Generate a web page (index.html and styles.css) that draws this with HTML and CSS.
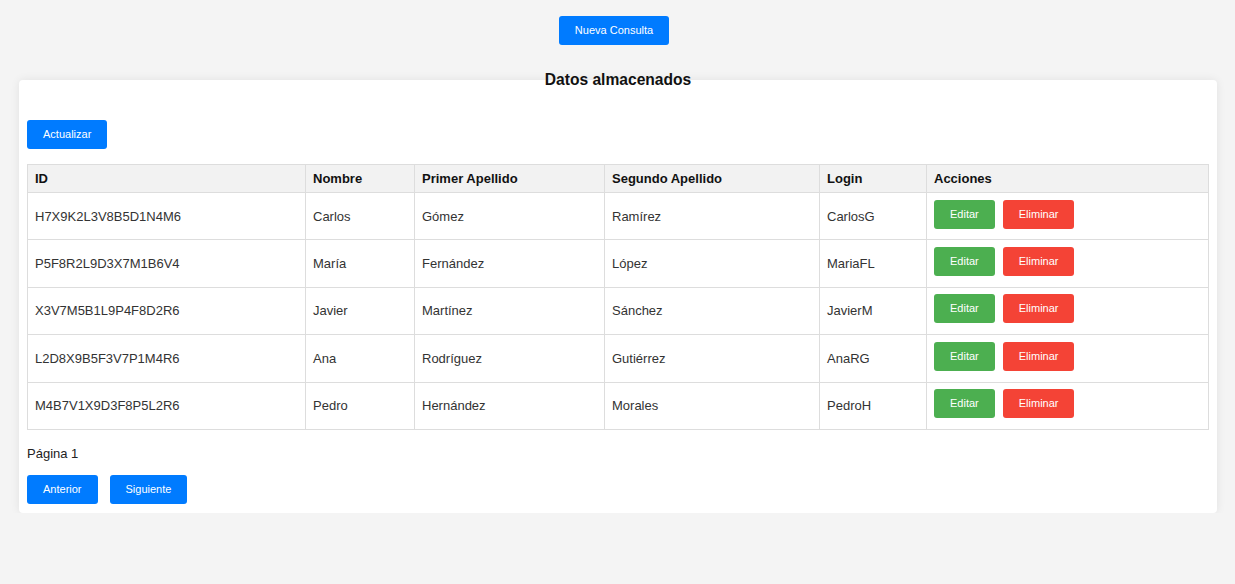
FILE: index.html
```html
<!DOCTYPE html>
<html lang="es">
<head>
<meta charset="utf-8">
<title>Datos almacenados</title>
<link rel="stylesheet" href="styles.css">
</head>
<body>
<div class="top">
  <button class="btn btn-blue">Nueva Consulta</button>
</div>
<section class="card">
  <h2 class="title">Datos almacenados</h2>
  <button class="btn btn-blue refresh">Actualizar</button>
  <table class="data">
    <colgroup>
      <col class="c-id"><col class="c-nombre"><col class="c-ap1"><col class="c-ap2"><col class="c-login"><col class="c-acc">
    </colgroup>
    <thead>
      <tr><th>ID</th><th>Nombre</th><th>Primer Apellido</th><th>Segundo Apellido</th><th>Login</th><th>Acciones</th></tr>
    </thead>
    <tbody>
      <tr><td>H7X9K2L3V8B5D1N4M6</td><td>Carlos</td><td>Gómez</td><td>Ramírez</td><td>CarlosG</td><td class="acc"><button class="btn btn-green">Editar</button><button class="btn btn-red">Eliminar</button></td></tr>
      <tr><td>P5F8R2L9D3X7M1B6V4</td><td>María</td><td>Fernández</td><td>López</td><td>MariaFL</td><td class="acc"><button class="btn btn-green">Editar</button><button class="btn btn-red">Eliminar</button></td></tr>
      <tr><td>X3V7M5B1L9P4F8D2R6</td><td>Javier</td><td>Martínez</td><td>Sánchez</td><td>JavierM</td><td class="acc"><button class="btn btn-green">Editar</button><button class="btn btn-red">Eliminar</button></td></tr>
      <tr><td>L2D8X9B5F3V7P1M4R6</td><td>Ana</td><td>Rodríguez</td><td>Gutiérrez</td><td>AnaRG</td><td class="acc"><button class="btn btn-green">Editar</button><button class="btn btn-red">Eliminar</button></td></tr>
      <tr><td>M4B7V1X9D3F8P5L2R6</td><td>Pedro</td><td>Hernández</td><td>Morales</td><td>PedroH</td><td class="acc"><button class="btn btn-green">Editar</button><button class="btn btn-red">Eliminar</button></td></tr>
    </tbody>
  </table>
  <p class="page">Página 1</p>
  <div class="pager">
    <button class="btn btn-blue">Anterior</button>
    <button class="btn btn-blue">Siguiente</button>
  </div>
</section>
</body>
</html>
```
FILE: styles.css
```css
html, body {
  margin: 0;
  padding: 0;
}
body {
  background: #f4f4f4;
  font-family: "Liberation Sans", Arial, sans-serif;
  font-size: 13px;
  color: #333;
}
.top {
  display: flex;
  justify-content: center;
  padding-top: 16px;
  padding-right: 7px;
}
.btn {
  font-family: "Liberation Sans", Arial, sans-serif;
  font-size: 11px;
  line-height: 13px;
  height: 29px;
  padding: 0 16px;
  border: none;
  border-radius: 3px;
  color: #fff;
  cursor: pointer;
  display: inline-block;
  vertical-align: middle;
}
.btn-blue { background: #007bff; }
.btn-green { background: #4caf50; }
.btn-red { background: #f44336; }

.card {
  display: flow-root;
  margin: 35px 18px 0 19px;
  padding: 0 8px 9px;
  background: #fff;
  border-radius: 4px;
  box-shadow: 0 0 10px rgba(0, 0, 0, 0.08);
}
.title {
  margin: -9px 0 0;
  text-align: center;
  font-size: 15.6px;
  line-height: 18px;
  font-weight: bold;
  color: #111;
}
.refresh {
  margin-top: 31px;
  display: block;
}
.data {
  width: 100%;
  margin-top: 15px;
  border-collapse: collapse;
}
.c-id { width: 278px; }
.c-nombre { width: 109px; }
.c-ap1 { width: 190px; }
.c-ap2 { width: 215px; }
.c-login { width: 107px; }
.data th, .data td {
  border: 1px solid #ddd;
  text-align: left;
  padding: 0 7px;
}
.data th {
  background: #f2f2f2;
  color: #111;
  font-weight: bold;
  height: 27px;
}
.data td {
  height: 46.4px;
}
.acc .btn + .btn {
  margin-left: 8px;
}
.acc .btn {
  position: relative;
  top: -2px;
}
.page {
  margin: 16px 0 14px;
  line-height: 15px;
  color: #222;
}
.pager {
  display: flex;
  gap: 12px;
}
```
